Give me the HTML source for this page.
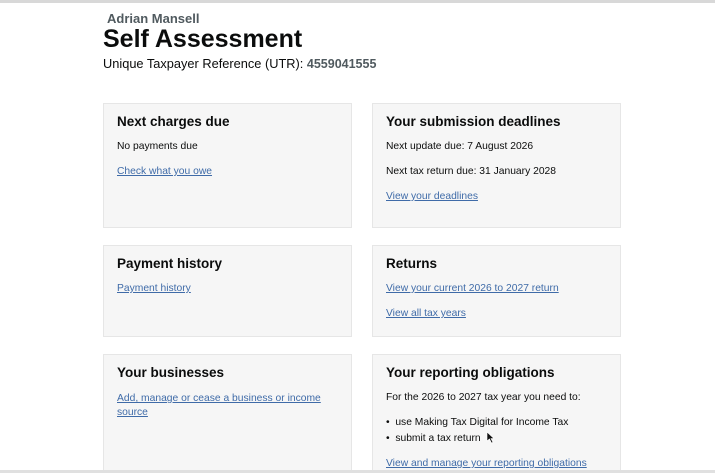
<!DOCTYPE html>
<html><head><meta charset="utf-8"><style>
body{margin:0;width:715px;height:473px;overflow:hidden;background:#fff;font-family:"Liberation Sans",Arial,sans-serif;color:#0b0c0c;position:relative}
.top{position:absolute;left:0;top:0;width:715px;height:3px;background:#d8d8d8}
.bot{position:absolute;left:0;top:470px;width:715px;height:3px;background:#e0e0e0}
.abs{position:absolute;white-space:nowrap}
.card{position:absolute;background:#f6f6f6;border:1px solid #e6e6e6;box-sizing:border-box}
.card h2{position:absolute;left:13px;margin:0;font-size:13.5px;font-weight:bold}
.t{position:absolute;left:13px;font-size:10.3px;white-space:nowrap}
a{color:#3f6ba8;text-decoration:underline}
</style></head><body>
<div class="top"></div>
<div class="abs" style="left:107px;top:11px;font-size:13px;font-weight:bold;color:#505a5f">Adrian Mansell</div>
<div class="abs" style="left:103px;top:25px;font-size:25px;font-weight:bold">Self Assessment</div>
<div class="abs" style="left:103px;top:56px;font-size:12.8px">Unique Taxpayer Reference (UTR): <span style="color:#505a5f;font-weight:bold;font-size:12.5px">4559041555</span></div>

<div class="card" style="left:103px;top:103px;width:249px;height:125px">
<h2 style="top:10px">Next charges due</h2>
<div class="t" style="top:37px">No payments due</div>
<div class="t" style="top:62px"><a>Check what you owe</a></div>
</div>
<div class="card" style="left:372px;top:103px;width:249px;height:125px">
<h2 style="top:10px">Your submission deadlines</h2>
<div class="t" style="top:37px">Next update due: 7 August 2026</div>
<div class="t" style="top:62px">Next tax return due: 31 January 2028</div>
<div class="t" style="top:87px"><a>View your deadlines</a></div>
</div>

<div class="card" style="left:103px;top:245px;width:249px;height:92px">
<h2 style="top:10px">Payment history</h2>
<div class="t" style="top:37px"><a>Payment history</a></div>
</div>
<div class="card" style="left:372px;top:245px;width:249px;height:92px">
<h2 style="top:10px">Returns</h2>
<div class="t" style="top:37px"><a>View your current 2026 to 2027 return</a></div>
<div class="t" style="top:62px"><a>View all tax years</a></div>
</div>

<div class="card" style="left:103px;top:354px;width:249px;height:119px">
<h2 style="top:10px">Your businesses</h2>
<div class="t" style="top:37px;line-height:14px"><a>Add, manage or cease a business or income<br>source</a></div>
</div>
<div class="card" style="left:372px;top:354px;width:249px;height:119px">
<h2 style="top:10px">Your reporting obligations</h2>
<div class="t" style="top:37px">For the 2026 to 2027 tax year you need to:</div>
<div class="t" style="top:62px">•&nbsp; use Making Tax Digital for Income Tax</div>
<div class="t" style="top:78px">•&nbsp; submit a tax return</div>
<div class="t" style="top:103px"><a>View and manage your reporting obligations</a></div>
</div>
<svg class="abs" style="left:486px;top:431px" width="9" height="13" viewBox="0 0 9 13"><path d="M1 1 L1 10 L3.5 8 L5.5 12 L7 11.3 L5 7.5 L8 7.5 Z" fill="#111" stroke="#fff" stroke-width="0.6"/></svg>
<div class="bot"></div>
</body></html>
